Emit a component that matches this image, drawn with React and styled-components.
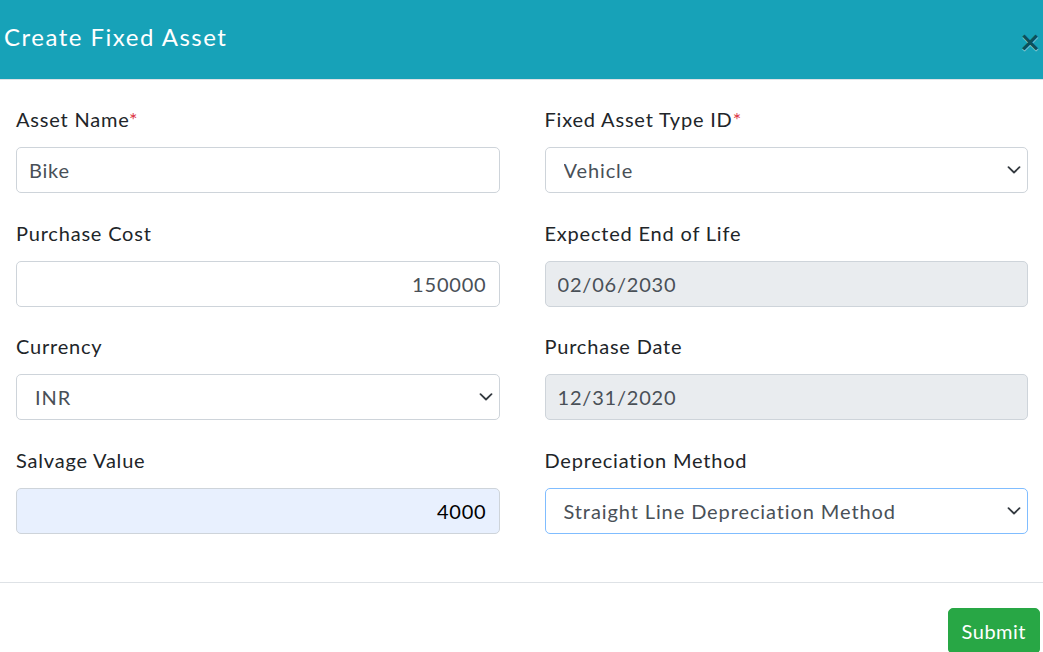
import React from "react";
import styled, { createGlobalStyle } from "styled-components";

const GlobalStyle = createGlobalStyle`
  html, body { margin: 0; padding: 0; background: #fff; }
  body { font-family: Lato, "Noto Sans", sans-serif; color: #212529; }
  * { box-sizing: border-box; }
`;

const Modal = styled.div`
  width: 1043px;
  min-height: 652px;
  background: #fff;
  overflow: hidden;
`;

const Header = styled.div`
  height: 80px;
  background: #17a2b8;
  border-bottom: 1px solid #dee2e6;
  display: flex;
  align-items: center;
  justify-content: space-between;
  padding: 0 3px 6px 4px;
`;

const Title = styled.h5`
  margin: 0;
  color: #fff;
  font-size: 24px;
  font-weight: 400;
  letter-spacing: 1.5px;
  line-height: 36px;
`;

const Close = styled.button`
  background: transparent;
  border: 0;
  padding: 0;
  margin: 8px 0 0 0;
  font-family: Lato, sans-serif;
  font-size: 34px;
  font-weight: 700;
  line-height: 1;
  color: #000;
  opacity: 0.5;
  text-shadow: 0 1px 0 #fff;
  cursor: pointer;
`;

const Body = styled.div`
  display: grid;
  grid-template-columns: 1fr 1fr;
  column-gap: 45px;
  row-gap: 26.6px;
  padding: 26px 15px 48px 16px;
`;

const Group = styled.div`
  display: flex;
  flex-direction: column;
`;

const Label = styled.label`
  display: block;
  font-size: 20px;
  line-height: 26px;
  letter-spacing: 0.8px;
  margin-bottom: 15px;
  color: #212529;
`;

const Req = styled.span`
  color: #dc3545;
`;

const bgFor = (v) =>
  v === "disabled" ? "#e9ecef" : v === "filled" ? "#e8f0fe" : "#fff";

const Input = styled.input`
  height: 46px;
  width: 100%;
  border: 1px solid #ced4da;
  border-radius: 5px;
  padding: 0 12px;
  font-family: Lato, sans-serif;
  font-size: 20px;
  letter-spacing: 0.8px;
  color: ${(p) => (p.$variant === "filled" ? "#000" : "#495057")};
  background: ${(p) => bgFor(p.$variant)};
  text-align: ${(p) => (p.$right ? "right" : "left")};
  outline: none;
`;

const SelectWrap = styled.div`
  position: relative;
  width: 100%;
`;

const Select = styled.select`
  appearance: none;
  -webkit-appearance: none;
  height: 46px;
  width: 100%;
  border: 1px solid ${(p) => (p.$focused ? "#80bdff" : "#ced4da")};
  border-radius: 5px;
  padding: 0 34px 0 18px;
  font-family: Lato, sans-serif;
  font-size: 20px;
  letter-spacing: 0.9px;
  color: #495057;
  background: #fff;
  outline: none;
`;

const Chevron = styled.svg`
  position: absolute;
  right: 7px;
  top: 50%;
  margin-top: -4px;
  width: 14px;
  height: 8px;
  pointer-events: none;
`;

const Footer = styled.div`
  border-top: 1px solid #dee2e6;
  display: flex;
  justify-content: flex-end;
  padding: 25px 3px 0 0;
`;

const Button = styled.button`
  background: #28a745;
  border: 1px solid #28a745;
  color: #fff;
  font-family: Lato, sans-serif;
  font-size: 20px;
  line-height: 30px;
  letter-spacing: 0.5px;
  padding: 7px 13px;
  border-radius: 5px;
  cursor: pointer;
`;

const SelectField = ({ value, options, focused }) => (
  <SelectWrap>
    <Select defaultValue={value} $focused={focused}>
      {options.map((o) => (
        <option key={o}>{o}</option>
      ))}
    </Select>
    <Chevron viewBox="0 0 14 8">
      <polyline
        points="1.5,1.2 7,6.5 12.5,1.2"
        fill="none"
        stroke="#343a40"
        strokeWidth="1.8"
        strokeLinecap="round"
        strokeLinejoin="round"
      />
    </Chevron>
  </SelectWrap>
);

export default function App() {
  return (
    <>
      <GlobalStyle />
      <Modal>
        <Header>
          <Title>Create Fixed Asset</Title>
          <Close aria-label="Close">×</Close>
        </Header>
        <Body>
          <Group>
            <Label>
              Asset Name<Req>*</Req>
            </Label>
            <Input defaultValue="Bike" />
          </Group>
          <Group>
            <Label>
              Fixed Asset Type ID<Req>*</Req>
            </Label>
            <SelectField value="Vehicle" options={["Vehicle", "Building", "Machinery"]} />
          </Group>
          <Group>
            <Label>Purchase Cost</Label>
            <Input defaultValue="150000" $right />
          </Group>
          <Group>
            <Label>Expected End of Life</Label>
            <Input defaultValue="02/06/2030" readOnly $variant="disabled" />
          </Group>
          <Group>
            <Label>Currency</Label>
            <SelectField value="INR" options={["INR", "USD", "EUR"]} />
          </Group>
          <Group>
            <Label>Purchase Date</Label>
            <Input defaultValue="12/31/2020" readOnly $variant="disabled" />
          </Group>
          <Group>
            <Label>Salvage Value</Label>
            <Input defaultValue="4000" $right $variant="filled" />
          </Group>
          <Group>
            <Label>Depreciation Method</Label>
            <SelectField
              value="Straight Line Depreciation Method"
              options={["Straight Line Depreciation Method", "Declining Balance Method"]}
              focused
            />
          </Group>
        </Body>
        <Footer>
          <Button>Submit</Button>
        </Footer>
      </Modal>
    </>
  );
}
